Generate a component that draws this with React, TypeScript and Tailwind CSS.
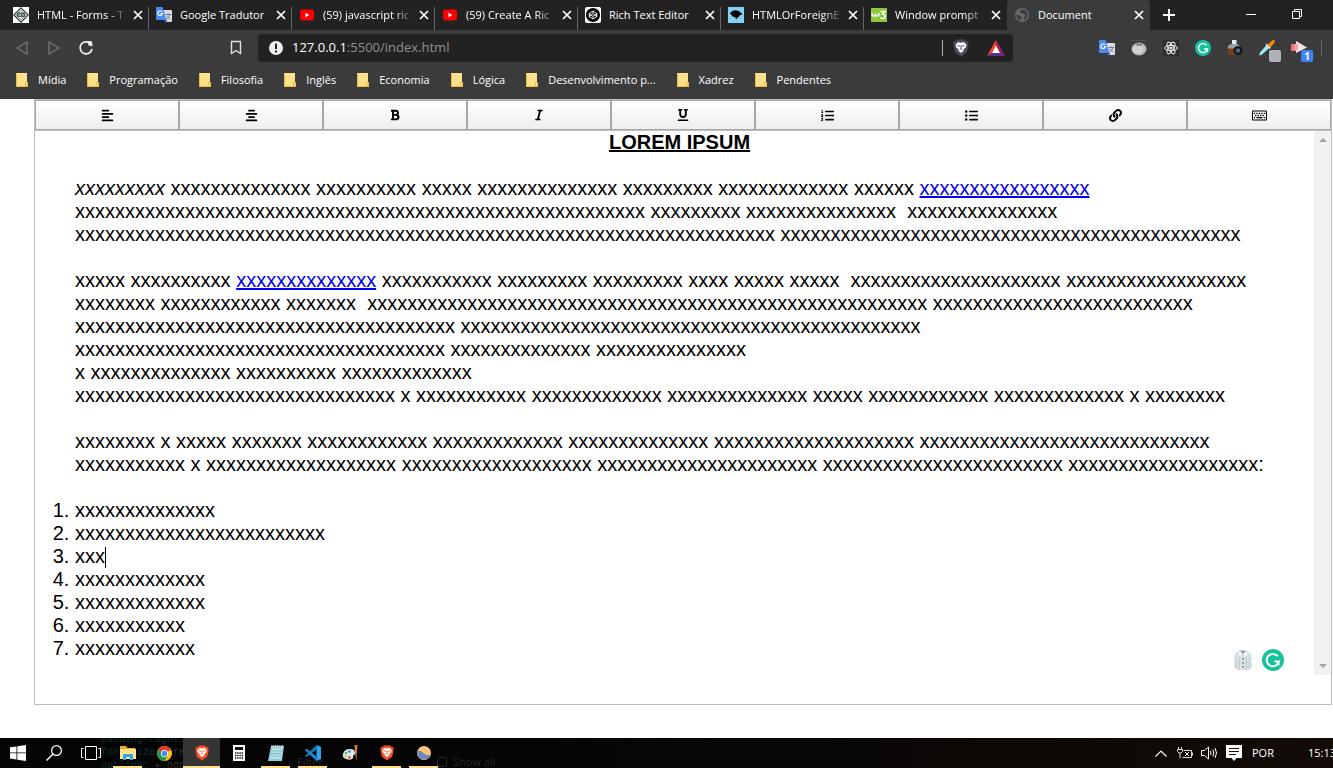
import type { ReactNode } from "react";
import {
  FaAlignCenter,
  FaAlignLeft,
  FaBold,
  FaItalic,
  FaLink,
  FaListOl,
  FaListUl,
  FaRegKeyboard,
  FaUnderline,
} from "react-icons/fa";
import { SiCodepen } from "react-icons/si";

const x = (n: number) => "x".repeat(n);
const words = (...counts: number[]) => counts.map(x).join(" ");

/* ---------- icons ---------- */

function YouTubeIcon() {
  return (
    <svg viewBox="0 0 16 16" className="size-4">
      <rect x="1" y="2.5" width="14" height="11" rx="2.5" fill="#f00" />
      <path d="M6.5 5.8v4.4L10.3 8z" fill="#fff" />
    </svg>
  );
}

function TranslateIcon() {
  return (
    <svg viewBox="0 0 16 16" className="size-4">
      <path d="M6 3h9a1 1 0 0 1 1 1v10a1 1 0 0 1-1 1H9.5z" fill="#dadce0" />
      <path d="M9.500 7.500h5.500M12.200 6.300v1.200M14 7.500c-.5 2-2 3.600-3.500 4.500M10.800 8.500c.7 1.500 1.800 2.600 3.500 3.500" stroke="#6f8090" strokeWidth="1" fill="none" />
      <path d="M8 13h3.200L9.500 16z" fill="#3056c0" />
      <path d="M1 0h5.500L10.500 13H1a1 1 0 0 1-1-1V1a1 1 0 0 1 1-1z" fill="#4c8bf5" />
      <path d="M6 4.900A2.300 2.300 0 1 0 6.400 6.600H4.500" stroke="#fff" strokeWidth="1.100" fill="none" />
    </svg>
  );
}

function FormsIcon() {
  return (
    <svg viewBox="0 0 16 16" className="size-4">
      <path d="M0 0h16v16H0z" fill="#fff" />
      <path d="M8 .8L15.200 8 8 15.200.800 8z" fill="#f0f2f1" stroke="#333" strokeWidth="1.100" />
      <path d="M8 3.200L12.800 8 8 12.800 3.200 8z" fill="none" stroke="#777" strokeWidth=".8" />
      <path d="M4 5.500h8v4.500H4z" fill="#476a55" />
      <path d="M5 8h2M9 8h2M7.500 7v2" stroke="#cfe0d4" strokeWidth=".8" />
    </svg>
  );
}

function CodePenIcon() {
  return (
    <span className="flex size-4 items-center justify-center rounded-xs bg-white text-black">
      <SiCodepen size={14} />
    </span>
  );
}

function MdnIcon() {
  return (
    <svg viewBox="0 0 16 16" className="size-4">
      <path d="M0 0h16v16H0z" fill="#83d0f2" />
      <path d="M2 6.500C3.500 4 6 3 8.500 3.400c2.500 0 3.500 1.600 5.500 3.100l-.5 1.500-2 .3-.8 2-1.500.2L8.500 12.500 6.800 10 4.500 9.500 3.500 8z" fill="#050505" />
    </svg>
  );
}

function W3Icon() {
  return (
    <svg viewBox="0 0 16 16" className="size-4">
      <path d="M0 1h16v14H0z" fill="#8bc63e" />
      <path d="M1 6v1q0 2 1.700 2T4.500 7V6.500 7q0 2 1.800 2T8 6M9.500 4.500h4.500L11.500 7q2.500.2 2.500 2.200 0 2.300-2.200 2.300-1.600 0-2.300-1" stroke="#fff" strokeWidth="1.500" fill="none" />
    </svg>
  );
}

function GlobeIcon() {
  return (
    <svg viewBox="0 0 16 16" className="size-4">
      <circle cx="8" cy="8" r="7" fill="#65686c" />
      <path d="M9 2.500c-2 .3-3 1-3.500 2.500L8 6.500l2 .3 1.500 1.700-1.200 1.200L9.500 13c2.500-.8 4-2.700 4-5 0-3-2-5-4.500-5.500zM2.500 7.500l2 .8 2.500.7.5 1.500-1.300 2.700C4 12.500 2.500 10.500 2.500 7.500z" fill="#3b3b3b" />
    </svg>
  );
}

function GrammarlyIcon({ className }: { className: string }) {
  return (
    <svg viewBox="0 0 22 22" className={className}>
      <circle cx="11" cy="11" r="11" fill="#15c39a" />
      <path d="M15.800 7.200A6.200 6.200 0 1 0 17 12.500h-4.500M16.500 12.500v3.700" fill="none" stroke="#fff" strokeWidth="2" />
    </svg>
  );
}

function BraveLion({ shield, face, className }: { shield: string; face: string; className: string }) {
  return (
    <svg viewBox="0 0 16 18" className={className}>
      <path d="M4.500.500h7l1.700 1.700 1.500-.2 1 2.200-.6 1.300.4 1.200-1.700 6.500L8 17.700 2.200 13.200.500 6.700l.4-1.200L.300 4.200l1-2.200 1.500.2z" fill={shield} />
      <path d="M4.500 3.500L6.300 3.300 8 3.800l1.700-.5 1.800.2 2 2.500-.9 2.800L10.500 10l.5 1.300L8 13.900l-3-2.600.5-1.300-2.100-1.200L2.500 6z" fill={face} />
      <path d="M4.300 6.300l2.700 1M11.700 6.300l-2.700 1M8 6v3.500M6.500 10.700L8 9.700l1.500 1" fill="none" stroke={shield} strokeWidth=".9" />
    </svg>
  );
}

function ChromeIcon() {
  return (
    <svg viewBox="0 0 16 16" className="size-[15px]">
      <circle cx="8" cy="8" r="8" fill="#fbc116" />
      <path d="M8 8L1.100 4A8 8 0 0 1 14.900 4z" fill="#e33b2e" />
      <path d="M8 8L1.100 4A8 8 0 0 0 8 16l3.500-6z" fill="#229a4a" />
      <circle cx="8" cy="8" r="3.800" fill="#fff" />
      <circle cx="8" cy="8" r="2.900" fill="#4285f4" />
    </svg>
  );
}

/* ---------- browser chrome ---------- */

const tabs: { title: string; icon: ReactNode; fade?: boolean }[] = [
  { title: "HTML - Forms - T", icon: <FormsIcon />, fade: true },
  { title: "Google Tradutor", icon: <TranslateIcon /> },
  { title: "(59) javascript ric", icon: <YouTubeIcon />, fade: true },
  { title: "(59) Create A Ric", icon: <YouTubeIcon />, fade: true },
  { title: "Rich Text Editor", icon: <CodePenIcon /> },
  { title: "HTMLOrForeignE", icon: <MdnIcon />, fade: true },
  { title: "Window prompt", icon: <W3Icon />, fade: true },
  { title: "Document", icon: <GlobeIcon /> },
];

function TabStrip() {
  return (
    <div className="flex h-[30px] items-stretch bg-[#222] pl-1.5">
      <div role="tablist" className="flex min-w-0">
        {tabs.map((tab, i) => {
          const active = i === tabs.length - 1;
          return (
            <div
              key={tab.title}
              className={`flex w-[143px] min-w-0 items-center pr-1.5 pl-[7px] ${active ? "rounded-t-sm bg-[#3b3b3b]" : ""}`}
            >
              <span className="shrink-0">{tab.icon}</span>
              <button
                role="tab"
                aria-selected={active}
                className={`ml-2 min-w-0 flex-1 text-left text-[11px] whitespace-nowrap text-white ${tab.fade ? "[mask-image:linear-gradient(to_right,black_70px,transparent_92px)]" : ""}`}
              >
                {tab.title}
              </button>
              <button aria-label={`Close ${tab.title}`} className="ml-1 shrink-0">
                <svg viewBox="0 0 10 10" className="size-2.5">
                  <path d="M1 1l8 8M9 1L1 9" stroke="#fff" strokeWidth="1.700" />
                </svg>
              </button>
              {i < tabs.length - 2 && <span className="-mr-1.5 ml-[5px] mt-[7px] w-px shrink-0 self-stretch bg-[#666]" />}
            </div>
          );
        })}
      </div>
      <button aria-label="New tab" className="ml-3">
        <svg viewBox="0 0 14 14" className="size-3.5">
          <path d="M7 1v12M1 7h12" stroke="#fff" strokeWidth="2" />
        </svg>
      </button>
      <div className="ml-auto flex items-center gap-9 pr-[31px] pb-0.5">
        <button aria-label="Minimize">
          <svg viewBox="0 0 10 10" className="size-2.5">
            <path d="M0 5.500h10" stroke="#fff" />
          </svg>
        </button>
        <button aria-label="Restore">
          <svg viewBox="0 0 10 10" className="size-2.5">
            <path d="M.5 2.500h7v7h-7zM2.500 2.500v-2h7v7h-2" stroke="#fff" fill="none" />
          </svg>
        </button>
      </div>
    </div>
  );
}

function Extensions() {
  return (
    <div className="ml-auto flex items-center gap-4">
      <button aria-label="Google Translate"><TranslateIcon /></button>
      <button aria-label="Tomato timer">
        <svg viewBox="0 0 16 16" className="size-4">
          <ellipse cx="8" cy="9" rx="7.500" ry="6.500" fill="#b9b9b9" />
          <ellipse cx="7" cy="9" rx="5.500" ry="4.500" fill="#d2d2d2" />
          <path d="M8 4.500L5 2.500l1.500 2.200L4 6l4-.8 4 .8-2.500-1.300 2-2.200z" fill="#4b4b4b" />
          <path d="M0 0h16v.8H0z" fill="#555" />
        </svg>
      </button>
      <button aria-label="React Developer Tools">
        <svg viewBox="0 0 16 16" className="size-4">
          <path d="M0 0h16v16H0z" fill="#2c2c2c" />
          <g fill="none" stroke="#ececec" strokeWidth="1">
            <ellipse cx="8" cy="8" rx="6.500" ry="2.600" />
            <ellipse cx="8" cy="8" rx="6.500" ry="2.600" transform="rotate(60 8 8)" />
            <ellipse cx="8" cy="8" rx="6.500" ry="2.600" transform="rotate(120 8 8)" />
          </g>
          <circle cx="8" cy="8" r="1.500" fill="#ececec" />
        </svg>
      </button>
      <button aria-label="Grammarly"><GrammarlyIcon className="size-4" /></button>
      <button aria-label="Screenshot camera">
        <svg viewBox="0 0 16 16" className="size-4">
          <path d="M5 0h4.500v4H5z" fill="#e3ebf5" />
          <path d="M1 6l3-2h6l3 2v3H1z" fill="#9aa0aa" />
          <path d="M1 8.500h8V15H1z" fill="#7b3b16" />
          <circle cx="11" cy="10.500" r="4.500" fill="#15171b" />
          <circle cx="11" cy="10.500" r="2.200" fill="#596575" />
        </svg>
      </button>
      <button aria-label="Color picker" className="relative">
        <svg viewBox="0 0 16 16" className="size-4">
          <path d="M0 15.500l1-3 7-8 3 3-8 7z" fill="#9eeaf5" />
          <path d="M7.500 3.500L12 8l-1.500.8L6.800 5z" fill="#e8e8e8" />
          <path d="M8.500 5L13 .500q2-1 3 .5 0 1.500-4.700 6.500z" fill="#f58a07" />
        </svg>
        <span className="absolute top-2.5 left-2.5 size-3 rounded-xs bg-[#aeb4b6]" />
      </button>
      <button aria-label="Tag assistant, 1 notice" className="relative">
        <svg viewBox="0 0 16 16" className="size-4">
          <path d="M0 4h5v7H0z" fill="#ef7070" />
          <path d="M5 1l11 6.500L5 13z" fill="#fbe4e4" />
          <path d="M3 4h4v6H3z" fill="#f5a0a0" />
        </svg>
        <span className="absolute top-2.5 left-2.5 flex size-3 items-center justify-center rounded-xs bg-[#3d82f7] text-[10px] leading-none font-bold text-white">
          1
        </span>
      </button>
      <span className="-ml-0.5 h-4 w-px bg-[#666]" />
    </div>
  );
}

function NavBar() {
  return (
    <div className="flex h-9 items-center pr-[11px] pl-4">
      <button aria-label="Back">
        <svg viewBox="0 0 12 14" className="h-3.5 w-3"><path d="M11 1v12L1 7z" fill="none" stroke="#777" strokeWidth="1.300" strokeLinejoin="round" /></svg>
      </button>
      <button aria-label="Forward" className="ml-5">
        <svg viewBox="0 0 12 14" className="h-3.5 w-3"><path d="M1 1v12l10-6z" fill="none" stroke="#777" strokeWidth="1.300" strokeLinejoin="round" /></svg>
      </button>
      <button aria-label="Reload" className="ml-[18px]">
        <svg viewBox="0 0 16 16" className="size-4">
          <path d="M10.500 2.300A6 6 0 1 0 14 9" fill="none" stroke="#f2f2f2" strokeWidth="1.700" />
          <path d="M9.300 1l4.700.2.500 5-4-.7z" fill="#f2f2f2" />
        </svg>
      </button>
      <button aria-label="Bookmark this page" className="ml-[136px]">
        <svg viewBox="0 0 12 16" className="h-4 w-3"><path d="M1.500 1.500h9v12L6 10.500l-4.500 3z" fill="none" stroke="#e0e0e0" strokeWidth="1.400" /></svg>
      </button>
      <div className="ml-4 flex h-7 min-w-0 flex-[0_1_755px] items-center rounded-sm bg-[#222] pr-2 pl-[11px]">
        <svg viewBox="0 0 14 14" className="size-3.5 shrink-0">
          <circle cx="7" cy="7" r="7" fill="#eee" />
          <path d="M6 2.500h2v5.500H6zM6 9.500h2v2H6z" fill="#222" />
        </svg>
        <span className="ml-[9px] text-[13px] text-[#8f8f8f]">
          <span className="text-white">127.0.0.1</span>:5500/index.html
        </span>
        <span className="ml-auto h-4 w-px bg-[#aaa]" />
        <BraveLion shield="#484b60" face="#fff" className="ml-2.5 h-[18px] w-4" />
        <svg viewBox="0 0 18 16" className="ml-[18px] h-4 w-[18px]">
          <path d="M9 0l4 7.200H9L5 13 0 16z" fill="#ff4724" />
          <path d="M9 0l9 16-5.500-3L9 6z" fill="#9e1f63" />
          <path d="M0 16l4.500-3.200h9L18 16z" fill="#662d91" />
          <path d="M9 5.500l4 7.500H5z" fill="#fff" />
        </svg>
      </div>
      <Extensions />
    </div>
  );
}

const bookmarks = [
  "Mídia",
  "Programação",
  "Filosofia",
  "Inglês",
  "Economia",
  "Lógica",
  "Desenvolvimento p...",
  "Xadrez",
  "Pendentes",
];

function Bookmarks() {
  return (
    <nav className="flex h-[33px] items-start gap-[21px] pt-1 pl-4">
      {bookmarks.map((name) => (
        <a key={name} href="#" className="flex items-center gap-[10px] text-[11px] leading-5 whitespace-nowrap text-white">
          <svg viewBox="0 0 12 14" className="h-3.5 w-3">
            <path d="M0 0h11v9h1v5H0z" fill="#ffe08a" />
            <path d="M.5.5v13M0 13.500h11.500M11.500 9v4.500M9.500 13v-3.500h2" fill="none" stroke="#e3b93c" strokeWidth=".9" />
          </svg>
          {name}
        </a>
      ))}
    </nav>
  );
}

/* ---------- editor ---------- */

const tools = [
  { label: "Align left", Icon: FaAlignLeft, size: 13 },
  { label: "Align center", Icon: FaAlignCenter, size: 13 },
  { label: "Bold", Icon: FaBold, size: 12 },
  { label: "Italic", Icon: FaItalic, size: 12 },
  { label: "Underline", Icon: FaUnderline, size: 12 },
  { label: "Numbered list", Icon: FaListOl, size: 13 },
  { label: "Bulleted list", Icon: FaListUl, size: 13 },
  { label: "Insert link", Icon: FaLink, size: 13 },
  { label: "Keyboard", Icon: FaRegKeyboard, size: 15 },
];

function Toolbar() {
  return (
    <div role="toolbar" className="grid h-[31px] grid-cols-9 border-b border-[#c0c0c0]">
      {tools.map(({ label, Icon, size }) => (
        <button
          key={label}
          aria-label={label}
          className="flex items-center justify-center border border-[#a6a6a6] bg-linear-to-b from-white to-[#eee] text-black"
        >
          <Icon size={size} />
        </button>
      ))}
    </div>
  );
}

const link = "text-[#0000ee] underline";

function EditorContent() {
  return (
    <div className="min-w-0 flex-1 pl-10 text-[20px] leading-[23px] text-black">
      <h1 className="-ml-10 pl-[10px] text-center font-bold underline">LOREM IPSUM</h1>
      <br />
      <p className="whitespace-pre-wrap">
        <i>{x(9)}</i> {words(14, 10, 5, 14, 9, 13, 6)} <a href="#" className={link}>{x(17)}</a>
        <br />
        {words(57, 9, 15)}{"  "}{x(15)}
        <br />
        {words(70, 46)}
      </p>
      <br />
      <p className="whitespace-pre-wrap">
        {words(5, 10)} <a href="#" className={link}>{x(14)}</a> {words(11, 9, 9, 4, 5, 5)}{"  "}{words(21, 18)}
        <br />
        {words(8, 12, 7)}{"  "}{words(56, 26)}
        <br />
        {words(38, 46)}
        <br />
        {words(37, 14, 15)}
        <br />
        {words(1, 14, 10, 13)}
        <br />
        {words(32, 1, 11, 13, 14, 5, 12, 13, 1, 8)}
      </p>
      <br />
      <p className="whitespace-pre-wrap">
        {words(8, 1, 5, 7, 12, 13, 14, 20, 29)}
        <br />
        {words(11, 1, 19, 19, 22, 24, 19)}:
      </p>
      <br />
      <ol className="list-decimal">
        {[14, 25, 3, 13, 13, 11, 12].map((n, i) => (
          <li key={i}>
            {x(n)}
            {i === 2 && <span className="-mr-px inline-block h-[21px] w-px bg-black align-middle" />}
          </li>
        ))}
      </ol>
    </div>
  );
}

function Scrollbar() {
  return (
    <div className="flex w-[17px] shrink-0 flex-col items-center justify-between bg-[#f1f1f1] py-[7px]">
      <svg viewBox="0 0 8 4" className="h-1 w-2"><path d="M0 4l4-4 4 4z" fill="#a3a3a3" /></svg>
      <svg viewBox="0 0 8 4" className="h-1 w-2"><path d="M0 0l4 4 4-4z" fill="#a3a3a3" /></svg>
    </div>
  );
}

function ShirtIcon() {
  return (
    <svg viewBox="0 0 18 20" className="h-5 w-[18px]">
      <path d="M5 1.500L1.500 3Q0 4 0 6v12.500h2.500V20h13v-1.500H18V6q0-2-1.500-3L13 1.500z" fill="#dde4e8" />
      <path d="M2.700 7v12M5.500 8v11.500M12.500 8v11.500M15.300 7v12" stroke="#b4bec5" strokeWidth=".8" />
      <path d="M6 .500h6L9 4z" fill="#8e9ba3" />
      <path d="M5.500.500L3.500 4 6.500 8 9 4zM12.500.500l2 3.500-3 4L9 4z" fill="#f4f7f9" stroke="#b8c3ca" strokeWidth=".6" />
      <path d="M8.200 8h1.600v1.600H8.200zM8.200 12h1.600v1.600H8.200zM8.200 16h1.600v1.600H8.200z" fill="#67737b" />
    </svg>
  );
}

function Editor() {
  return (
    <main className="mr-px mb-[33px] ml-[34px] flex flex-1 flex-col border border-[#c0c0c0] pb-[29px]">
      <Toolbar />
      <div className="relative flex flex-1">
        <EditorContent />
        <Scrollbar />
        <div className="absolute right-[47px] bottom-1 flex items-center gap-2.5">
          <ShirtIcon />
          <GrammarlyIcon className="size-[22px]" />
        </div>
      </div>
    </main>
  );
}

/* ---------- taskbar ---------- */

const apps: { name: string; open?: boolean; active?: boolean; icon: ReactNode }[] = [
  {
    name: "Start",
    icon: (
      <svg viewBox="0 0 16 16" className="size-4"><path d="M0 2.300l6.500-.9v6.100H0zM7.300 1.300L16 0v7.500H7.300zM0 8.300h6.500v6.200L0 13.600zM7.300 8.300H16V16l-8.700-1.300z" fill="#fff" /></svg>
    ),
  },
  {
    name: "Search",
    icon: (
      <svg viewBox="0 0 16 16" className="size-4"><circle cx="10.500" cy="5.500" r="4.900" stroke="#fff" strokeWidth="1.200" fill="none" /><path d="M7 9L.5 15.500" stroke="#fff" strokeWidth="1.400" /></svg>
    ),
  },
  {
    name: "Task view",
    icon: (
      <svg viewBox="0 0 20 14" className="h-3.5 w-5"><path d="M4.500.500h11v13h-11zM2.500 2.500h-2v9h2M17.500 2.500h2v9h-2" stroke="#fff" fill="none" /></svg>
    ),
  },
  {
    name: "File Explorer",
    open: true,
    icon: (
      <svg viewBox="0 0 16 14" className="h-3.5 w-4">
        <path d="M0 0h6l1.500 2H15v3H0z" fill="#e9ad24" />
        <path d="M0 3h16v10H0z" fill="#ffe18b" />
        <path d="M3 14V8h10v6h-3v-3H6v3z" fill="#2ba8ec" />
      </svg>
    ),
  },
  { name: "Chrome", icon: <ChromeIcon /> },
  { name: "Brave", open: true, active: true, icon: <BraveLion shield="#fb4b25" face="#fff" className="h-4 w-3.5" /> },
  {
    name: "Calculator",
    icon: (
      <svg viewBox="0 0 12 16" className="h-4 w-3">
        <path d="M0 0h12v16H0z" fill="#fff" />
        <path d="M2 2h8v3H2z" fill="#111" />
        <path d="M2 8h8M2 10.500h8M2 13h8" stroke="#111" strokeWidth="1.300" strokeDasharray="1.400 .8" />
      </svg>
    ),
  },
  {
    name: "Notepad",
    open: true,
    icon: (
      <svg viewBox="0 0 16 16" className="size-4">
        <path d="M3 1h13l-2 15H0z" fill="#8ccbd8" />
        <path d="M4 3h10.500L13 14H2z" fill="#b7e3ea" />
        <path d="M3.500 6h10.500M3 8.500h10.500M2.500 11h10.500" stroke="#6aa9b8" strokeWidth=".7" />
        <path d="M3.500 1.200h12" stroke="#eee" strokeWidth="2" strokeDasharray="1 .8" />
      </svg>
    ),
  },
  {
    name: "Visual Studio Code",
    open: true,
    icon: (
      <svg viewBox="0 0 16 16" className="size-4">
        <path d="M11.500 4.500L1.500 12.300 0 11 11.500 0z" fill="#1478bd" />
        <path d="M11.500 11.500L1.500 3.700 0 5l11.500 11z" fill="#1b8bd6" />
        <path d="M11.500 0L16 2v12l-4.500 2z" fill="#2aa6f0" />
      </svg>
    ),
  },
  {
    name: "Paint",
    icon: (
      <svg viewBox="0 0 16 16" className="size-4">
        <path d="M1 9Q2 4 8 4q5 0 5 4 0 2-2 2.500 1 2-1 3.500-2 1.500-6 0Q0 13 1 9z" fill="#d6e9f5" />
        <circle cx="4" cy="8" r="1.300" fill="#45b649" /><circle cx="7.500" cy="6.500" r="1.300" fill="#3d7fe0" />
        <circle cx="4" cy="11.500" r="1.300" fill="#f0c22b" /><circle cx="7.500" cy="12.500" r="1.300" fill="#e0402f" />
        <path d="M12.500 0h3l-.5 6-.7 10-1.500-10z" fill="#d4812e" />
      </svg>
    ),
  },
  { name: "Brave (second window)", open: true, icon: <BraveLion shield="#fb4b25" face="#fff" className="h-4 w-3.5" /> },
  {
    name: "Browser",
    open: true,
    icon: (
      <svg viewBox="0 0 14 14" className="size-3.5">
        <circle cx="7" cy="7" r="7" fill="#fbc27a" />
        <path d="M.2 6q2.500-2.500 5.500.5T13.500 9.500A7 7 0 0 1 .2 6z" fill="#6b87c4" />
      </svg>
    ),
  },
];

function Taskbar() {
  return (
    <footer className="relative flex h-[30px] items-stretch overflow-hidden bg-linear-to-r from-[#050505] from-40% to-[#120b07]">
      <pre aria-hidden="true" className="absolute -top-[5px] left-[101px] font-['Liberation_Mono',monospace] text-[10px] leading-[13px] text-[#0f2e29]">
        padding-right: <span className="text-[#303030]">30px;</span>
        {"\n"}font-size: <span className="text-[#303030]">1rem;</span>
        {"\n"}outline: <span className="text-[#303030]">▸ none;</span>
      </pre>
      <div aria-hidden="true" className="absolute -bottom-0.5 left-[297px] flex items-center text-[11px] leading-4 text-[#262626]">
        <span className="w-35">Filter</span>
        <span className="size-2.5 rounded-xs border border-[#262626]" />
        <span className="ml-1.5">Show all</span>
      </div>
      <div className="relative flex">
        {apps.map((app) => (
          <button
            key={app.name}
            aria-label={app.name}
            className={`relative flex items-center justify-center first:w-[35px] w-[37px] ${app.active ? "bg-[#3a3a3a]/90" : ""}`}
          >
            {app.icon}
            {app.open && (
              <span className={`absolute bottom-0 h-0.5 bg-[#ffdf8e] ${app.active ? "inset-x-0" : "inset-x-1"}`} />
            )}
          </button>
        ))}
      </div>
      <div className="ml-auto flex items-center text-[11px] whitespace-nowrap text-white">
        <svg viewBox="0 0 12 7" className="h-[7px] w-3"><path d="M.5 6.500L6 1l5.500 5.500" stroke="#fff" strokeWidth="1.200" fill="none" /></svg>
        <svg viewBox="0 0 16 12" className="ml-2.5 h-3 w-4">
          <path d="M1.500 0v2.500M4.500 0v2.500M.5 2.500h5v2L4 6H2L.500 4.500zM3 6v5.500M6.500 3.500h8v7h-9M15.500 5.500v3" stroke="#ddd" fill="none" />
          <path d="M8 5l4 4M12 5L8 9" stroke="#fff" />
        </svg>
        <svg viewBox="0 0 17 14" className="ml-2 h-3.5 w-[17px]">
          <path d="M.5 4.500h3l4-3.500v12l-4-3.500h-3z" stroke="#fff" fill="none" />
          <path d="M9.500 5q1 2 0 4M11.800 3.500q2 3.500 0 7M14 2q3 5 0 10" stroke="#fff" fill="none" />
        </svg>
        <svg viewBox="0 0 16 16" className="ml-2 size-4">
          <path d="M0 0h16v13h-5.500L8 16l-2.500-3H0z" fill="#fff" />
          <path d="M3 3.500h10M3 6.500h10M3 9.500h7" stroke="#111" />
        </svg>
        <span className="ml-2.5">POR</span>
        <time className="-mr-[3px] ml-[34px]">15:13</time>
      </div>
    </footer>
  );
}

export default function App() {
  return (
    <div className="flex min-h-screen flex-col overflow-x-hidden bg-white font-['Liberation_Sans',Arial,sans-serif]">
      <header className="bg-[#3b3b3b] font-['Open_Sans',sans-serif]">
        <TabStrip />
        <NavBar />
        <Bookmarks />
      </header>
      <Editor />
      <div className="font-['Open_Sans',sans-serif]">
        <Taskbar />
      </div>
    </div>
  );
}
